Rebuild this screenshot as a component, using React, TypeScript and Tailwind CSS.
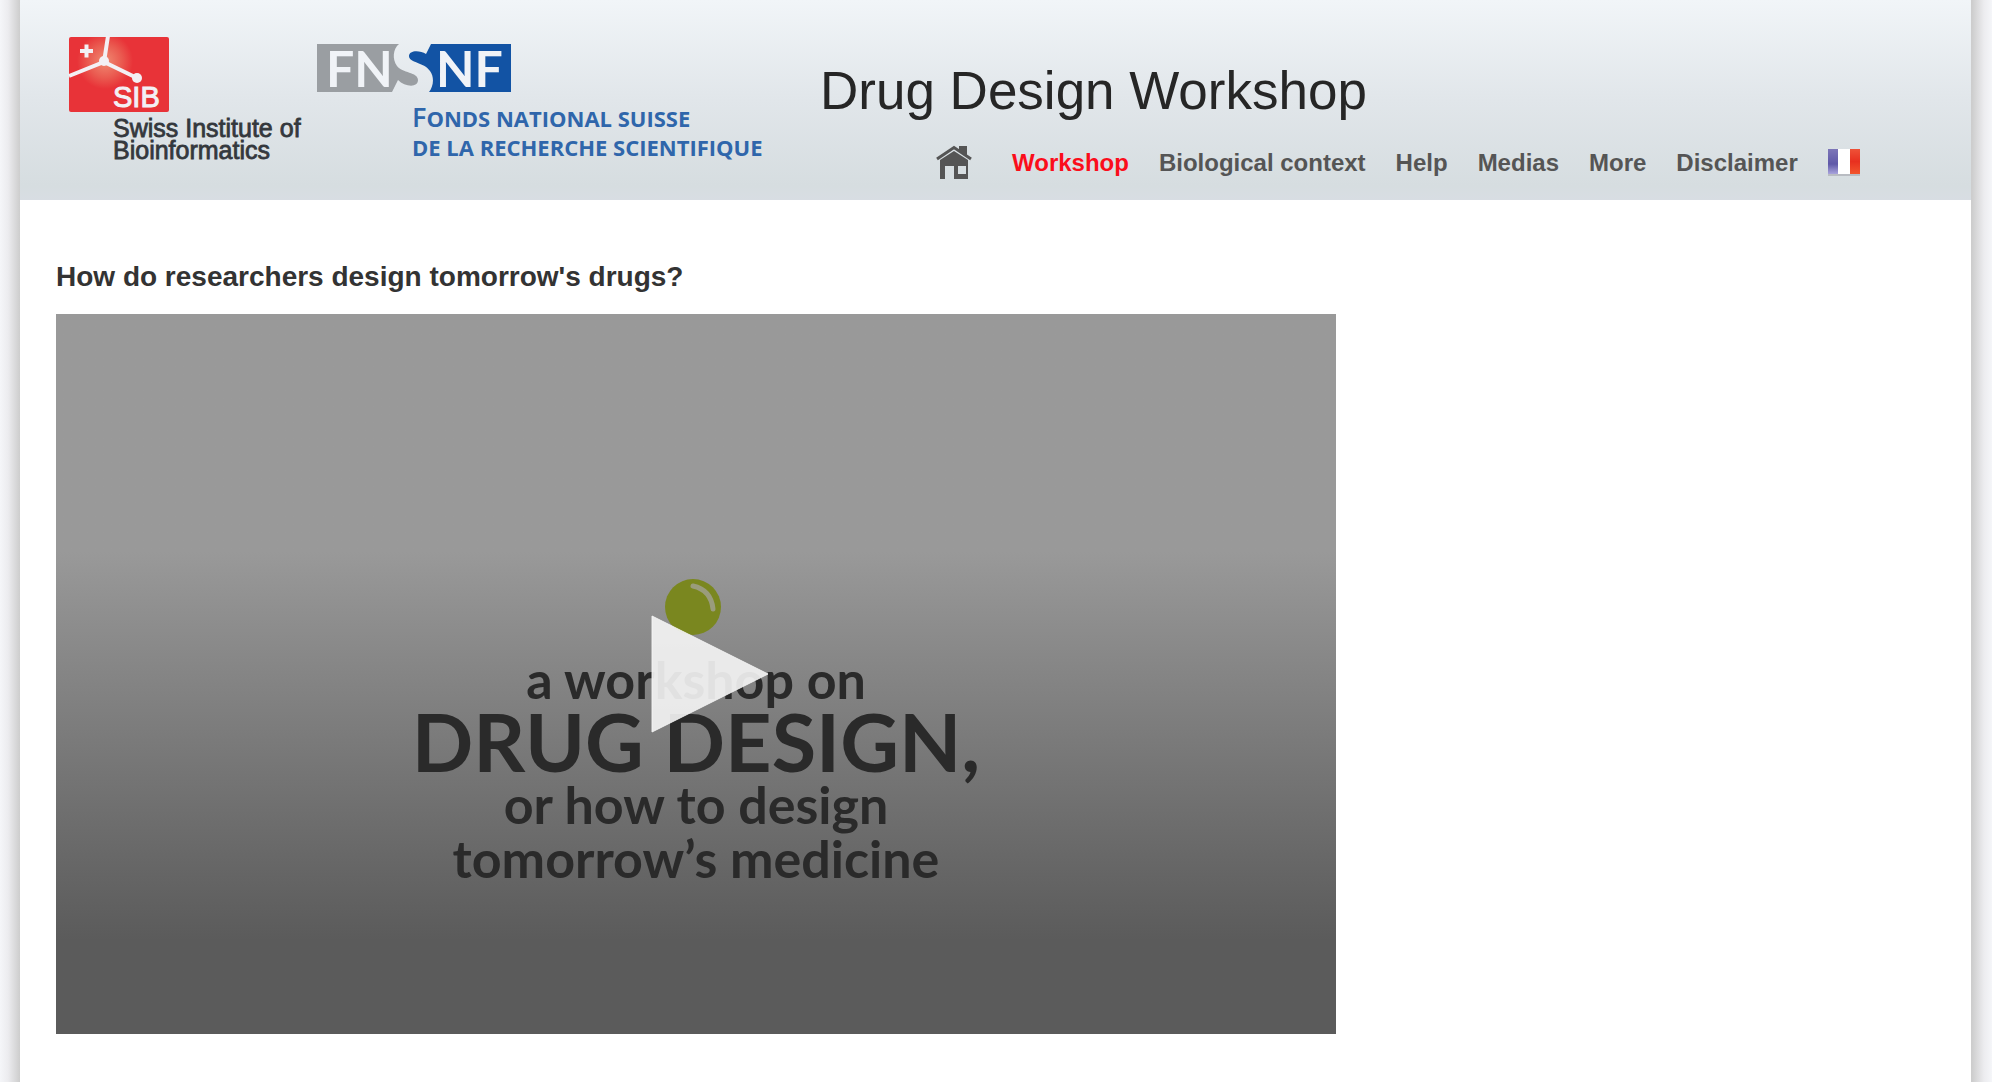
const links = ["Biological context", "Help", "Medias", "More", "Disclaimer"];

function SibLogo() {
  return (
    <svg className="h-[140px] w-[250px] shrink-0" viewBox="60 30 250 140" role="img" aria-label="SIB Swiss Institute of Bioinformatics">
      <defs>
        <radialGradient id="glow" gradientUnits="userSpaceOnUse" cx="105" cy="61" r="28">
          <stop offset="0" stopColor="#f08a72" />
          <stop offset="0.6" stopColor="#ea5a50" />
          <stop offset="1" stopColor="#e83338" />
        </radialGradient>
      </defs>
      <rect x="69" y="37" width="100" height="75" rx="2" fill="url(#glow)" />
      <path d="M69 76 104 62 137 78M104 62 108 36" stroke="#f3f0f4" strokeWidth="4" fill="none" />
      <circle cx="104" cy="61" r="5" fill="#f3f0f4" />
      <circle cx="137" cy="78" r="5" fill="#f3f0f4" />
      <path d="M80 51H93M86.500 44.500V57.500" stroke="#f3f0f4" strokeWidth="4" />
      <g fontFamily="'Liberation Sans', Arial, sans-serif">
        <text x="113" y="107" fontSize="29" fill="#f3f0f4" stroke="#f3f0f4" strokeWidth="1">SIB</text>
        <g fontSize="25" fill="#34383d" stroke="#34383d" strokeWidth="0.8">
          <text x="113" y="137">Swiss Institute of</text>
          <text x="113" y="159">Bioinformatics</text>
        </g>
      </g>
    </svg>
  );
}

function SnfLogo() {
  return (
    <svg className="h-[140px] w-[460px] shrink-0" viewBox="310 30 460 140" role="img" aria-label="Fonds national suisse de la recherche scientifique">
      <path d="M317 44H399C393 49 392 59 397 66C402 73 418 72 418 80C418 88 405 87 398 80L392 92H317Z" fill="#9a9ea2" />
      <path d="M511 44H431L426 54C420 50 409 50 409 56C409 63 424 62 430 71C435 78 433 87 429 92H511Z" fill="#1253a4" />
      <g fontFamily="Lato, sans-serif" fontWeight="700" fill="#f0f3f7">
        <text x="326" y="87" fontSize="50">FN</text>
        <text x="436" y="87" fontSize="50">NF</text>
      </g>
      <g fontFamily="'Open Sans', sans-serif" fontWeight="700" fill="#2f66ab">
        <text x="412" y="127" fontSize="22">
          <tspan fontSize="27" fontWeight="600">F</tspan>ONDS NATIONAL SUISSE
        </text>
        <text x="412" y="156" fontSize="22">DE LA RECHERCHE SCIENTIFIQUE</text>
      </g>
    </svg>
  );
}

function HomeIcon() {
  return (
    <svg className="h-9 w-9" viewBox="0 0 36 36" aria-hidden="true">
      <path d="M1 14 18 2.500 35 14" stroke="#555" strokeWidth="3" fill="none" />
      <path d="M23 1H31V11L23 6Z" fill="#555" />
      <path fillRule="evenodd" d="M4 15 18 6 32 15V34H18V21H9V34H4ZM22 21V29H30V21Z" fill="#555" />
    </svg>
  );
}

function FrenchFlag() {
  return (
    <svg className="h-7 w-8" viewBox="0 0 32 28" aria-hidden="true">
      <defs>
        <linearGradient id="blue" x2="0" y2="1">
          <stop offset="0" stopColor="#7d76b8" />
          <stop offset="0.6" stopColor="#5f58a8" />
          <stop offset="1" stopColor="#a9a4dc" />
        </linearGradient>
        <linearGradient id="red" x2="0" y2="1">
          <stop offset="0" stopColor="#ee5238" />
          <stop offset="0.5" stopColor="#e8301f" />
          <stop offset="1" stopColor="#f2552c" />
        </linearGradient>
      </defs>
      <rect y="1" width="32" height="26" fill="#b9bcc2" />
      <rect width="11" height="25" fill="url(#blue)" />
      <rect x="10" width="12" height="25" fill="#fff" />
      <rect x="22" width="10" height="25" fill="url(#red)" />
    </svg>
  );
}

function Header() {
  return (
    <header className="flex items-start bg-[linear-gradient(#f1f5f8,#e1e6ea_50%,#d6dde0_93%,#d8dde3)] pb-[17px] pl-10">
      <div className="flex pt-[30px]">
        <SibLogo />
        <SnfLogo />
      </div>
      <div className="flex flex-col pt-[60px]">
        <h1 className="pl-[50px] text-[53px] leading-[62px] whitespace-nowrap text-[#262626]">Drug Design Workshop</h1>
        <nav aria-label="Main" className="mt-[21px] flex items-center gap-[30px] pl-[166px] text-2xl font-bold whitespace-nowrap text-[#555]">
          <a href="#home" aria-label="Home" className="mr-[10px]"><HomeIcon /></a>
          <a href="#workshop" aria-current="page" className="leading-10 text-[#fb0d1b]">Workshop</a>
          {links.map((label) => (
            <a key={label} href="#" className="leading-10">{label}</a>
          ))}
          <a href="#fr" aria-label="Français"><FrenchFlag /></a>
        </nav>
      </div>
    </header>
  );
}

function VideoPoster() {
  return (
    <div className="relative aspect-video w-full max-w-[1280px] overflow-hidden bg-linear-to-b from-[#999] from-33% to-[#5b5b5b] to-87% pt-[265px] text-center font-[Lato] font-bold text-[#2a2a2a]">
      <svg className="mx-auto h-14 w-[62px]" viewBox="0 0 62 56" aria-hidden="true">
        <circle cx="28" cy="28" r="28" fill="#7a871f" />
        <path d="M28 7Q46 11 48 30" stroke="#9a9c7c" strokeWidth="5" strokeLinecap="round" fill="none" />
      </svg>
      <p className="mt-[18px] text-[52px] leading-[52px]">a workshop on</p>
      <p className="text-[81px] leading-[72px]">DRUG DESIGN,</p>
      <p className="text-[52px] leading-[54px]">or how to design</p>
      <p className="text-[52px] leading-[54px]">tomorrow’s medicine</p>
      <button type="button" aria-label="Play video" className="absolute inset-0 flex items-center justify-center">
        <svg className="ml-7 h-[120px] w-[120px]" viewBox="0 0 120 120" aria-hidden="true">
          <path d="M2 2V118L118 60Z" fill="#f5f5f5" fillOpacity="0.9" stroke="#f5f5f5" strokeOpacity="0.9" strokeWidth="1" strokeLinejoin="round" />
        </svg>
      </button>
    </div>
  );
}

export default function App() {
  return (
    <div className="min-h-screen bg-[linear-gradient(to_right,#f5f6f9,#ececef_8px,#cdcdcd_20px,#cdcdcd_calc(100%-20px),#ececef_calc(100%-8px),#f5f6f9)] pr-[21px] pl-5 font-['Liberation_Sans',Arial,sans-serif]">
      <div className="min-h-screen bg-white">
        <Header />
        <main className="px-9 pt-[61px] pb-12">
          <h2 className="mb-[21px] text-[28px] leading-8 font-bold text-[#333]">How do researchers design tomorrow's drugs?</h2>
          <VideoPoster />
        </main>
      </div>
    </div>
  );
}
